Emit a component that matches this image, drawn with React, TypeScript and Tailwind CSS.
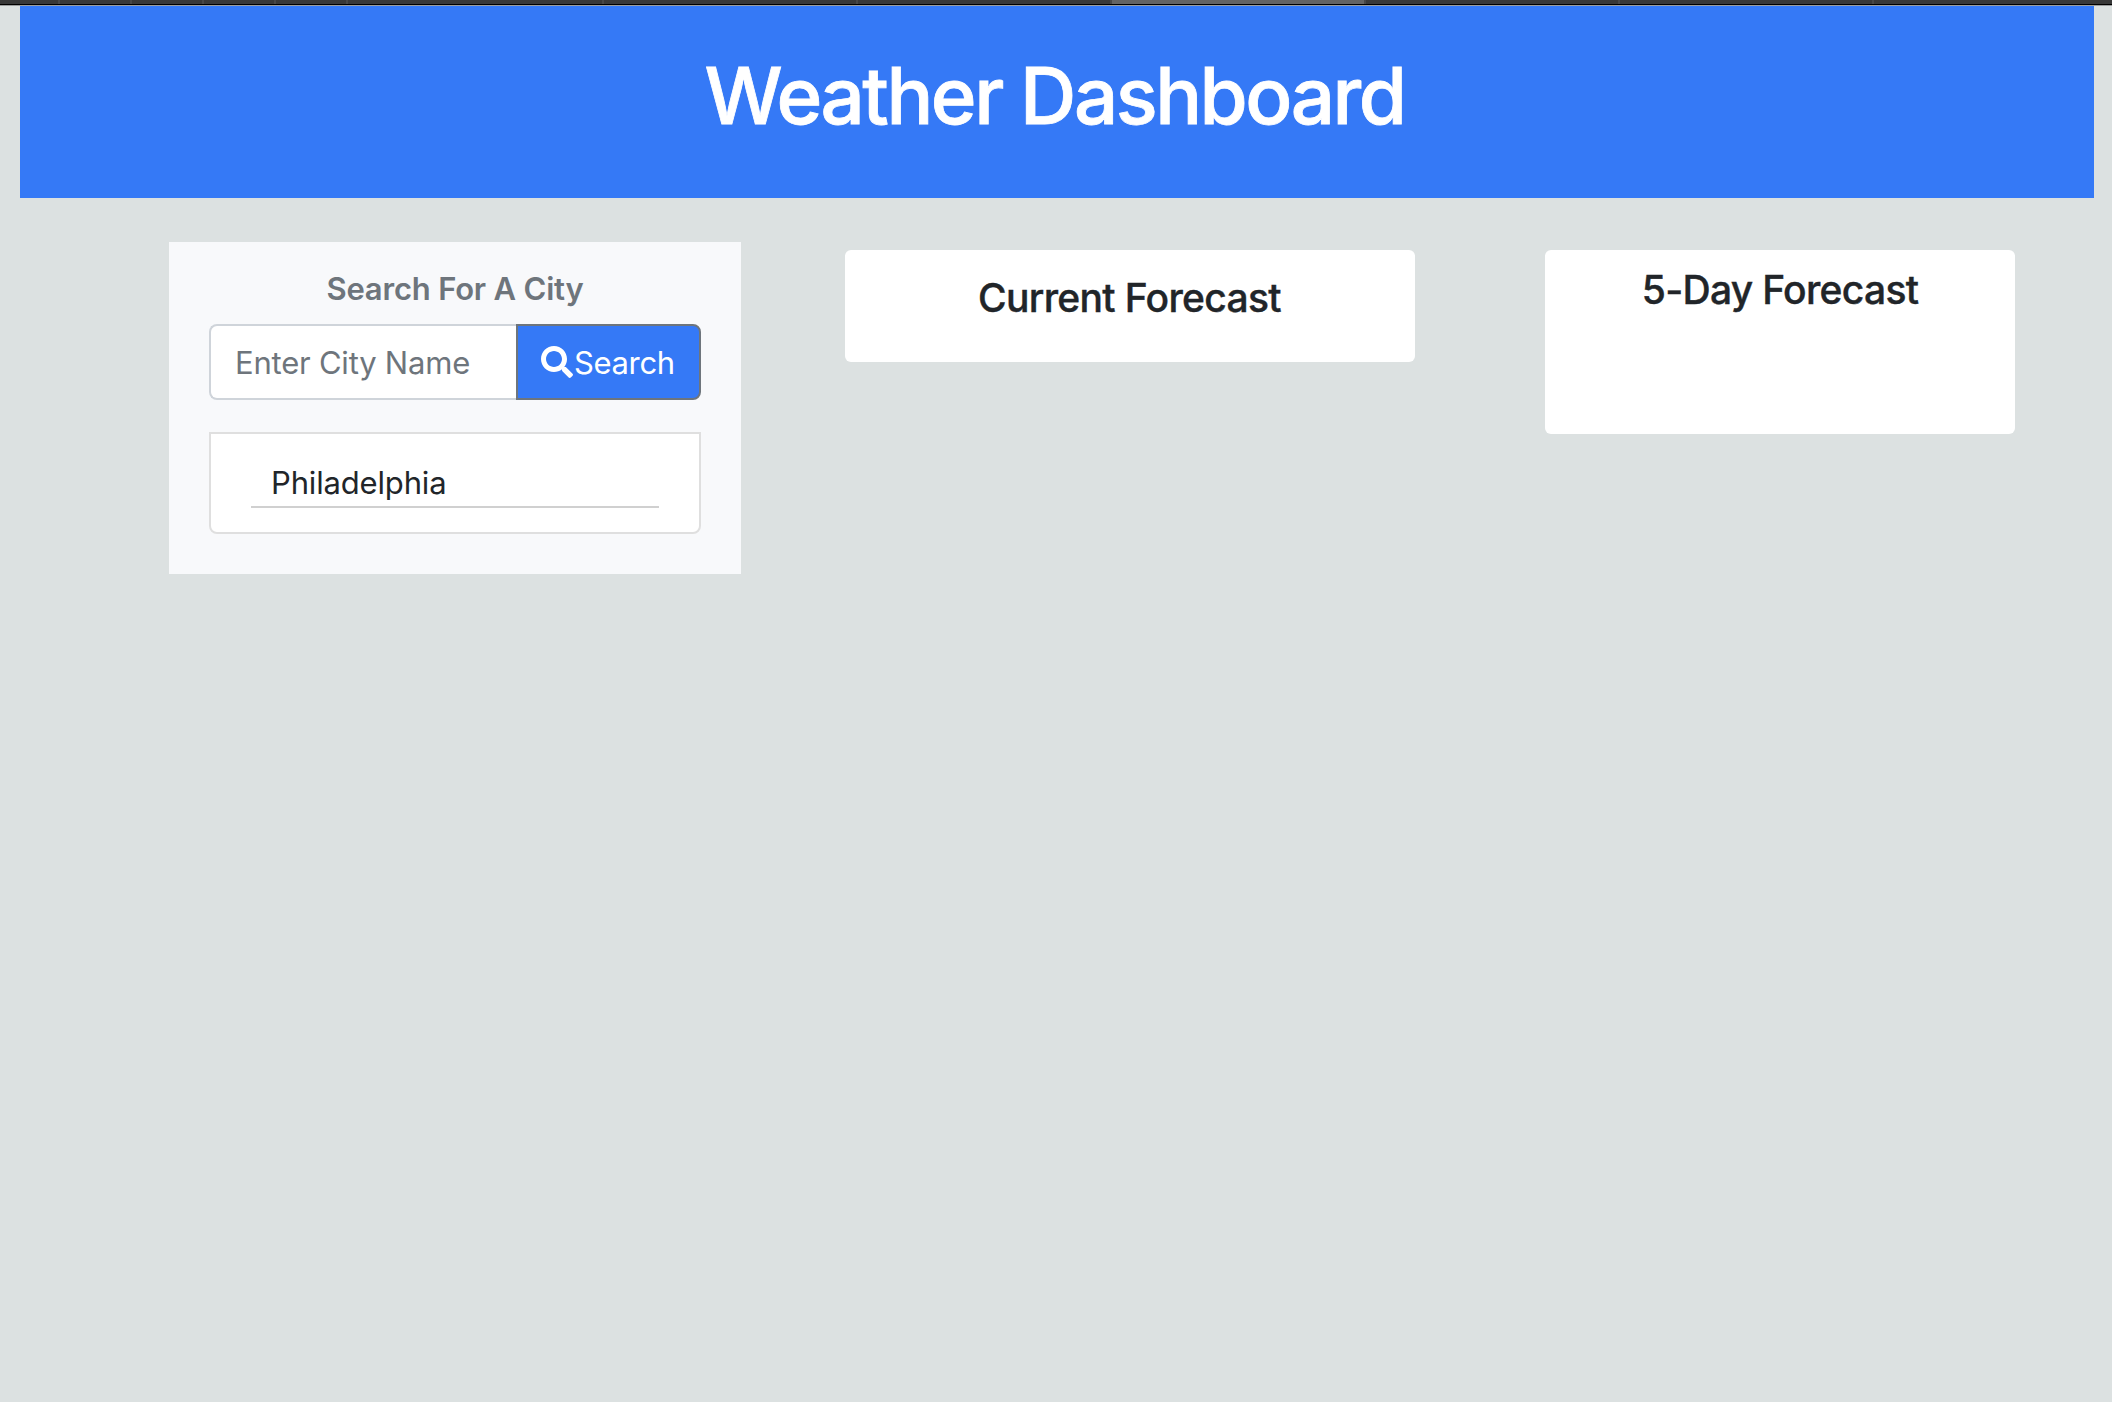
import { FaSearch } from "react-icons/fa";

const tabs = [
  "w-[58px] bg-[#383838]",
  "w-[70px] bg-[#383838]",
  "w-[70px] bg-[#383838]",
  "w-[70px] bg-[#383838]",
  "w-[70px] bg-[#383838]",
  "w-[254px] bg-[#383838]",
  "w-[252px] bg-[#383838]",
  "w-[252px] bg-[#383838]",
  "w-[252px] bg-[#636363]",
  "w-[252px] bg-[#383838]",
  "w-[252px] bg-[#383838]",
  "flex-1 bg-[#383838]",
];

function TabStrip() {
  return (
    <div className="flex h-1.5 w-full border-b border-[#9b9d9d] bg-black pb-px">
      <div className="flex h-1 w-full gap-0.5 bg-[#474747]">
        {tabs.map((tab, i) => (
          <div key={i} className={tab} />
        ))}
      </div>
    </div>
  );
}

function SearchCard() {
  return (
    <section className="h-[332px] w-[572px] bg-[#f8f9fb] px-10 pt-7 text-[31px]">
      <h2 className="text-center font-semibold leading-[38px] tracking-[-0.2px] text-[#6e757c]">Search For A City</h2>
      <form className="mt-4 flex h-[76px]" onSubmit={(e) => e.preventDefault()}>
        <input
          type="text"
          placeholder="Enter City Name"
          className="w-[307px] rounded-l-lg border-2 border-r-0 border-[#cfd4da] bg-white pl-6 pt-0.5 tracking-[-0.22px] outline-none placeholder:text-[#6e757c]"
        />
        <button
          type="submit"
          className="flex flex-1 items-center rounded-r-lg border-2 border-[#6e757c] bg-[#3579f6] pl-[23px] text-white"
        >
          <FaSearch className="size-8" />
          <span className="ml-px pt-0.5 tracking-[-0.36px]">Search</span>
        </button>
      </form>
      <ul className="mt-8 h-[102px] rounded-b-lg border-2 border-[#dfdfdf] bg-white px-10 pt-[25px]">
        <li className="h-[49px] border-b-2 border-[#d0d0d0] pl-5 leading-[48px] tracking-[-0.16px] text-[#212529]">
          Philadelphia
        </li>
      </ul>
    </section>
  );
}

export default function App() {
  return (
    <div className="min-h-screen bg-[#dce1e1] font-['Inter',sans-serif] text-[#212529]">
      <TabStrip />
      <header className="ml-5 mr-[18px] h-48 bg-[#3579f6] pr-[5px] pt-[42px] text-center">
        <h1 className="text-[78px] font-medium leading-[96px] tracking-[-2.5px] text-white [-webkit-text-stroke:0.8px_white]">
          Weather Dashboard
        </h1>
      </header>
      <main className="ml-[169px] mt-11 flex items-start">
        <SearchCard />
        <section className="ml-[104px] mt-2 h-28 w-[570px] rounded-md bg-white pr-px pt-6 text-center">
          <h2 className="text-[39px] font-medium leading-[48px] tracking-[-0.68px] [-webkit-text-stroke:0.4px_#212529]">
            Current Forecast
          </h2>
        </section>
        <section className="ml-[130px] mt-2 h-[184px] w-[470px] rounded-md bg-white pt-4 text-center">
          <h2 className="text-[39px] font-medium leading-[48px] tracking-[-0.7px] [-webkit-text-stroke:0.4px_#212529]">
            5-Day Forecast
          </h2>
        </section>
      </main>
    </div>
  );
}
